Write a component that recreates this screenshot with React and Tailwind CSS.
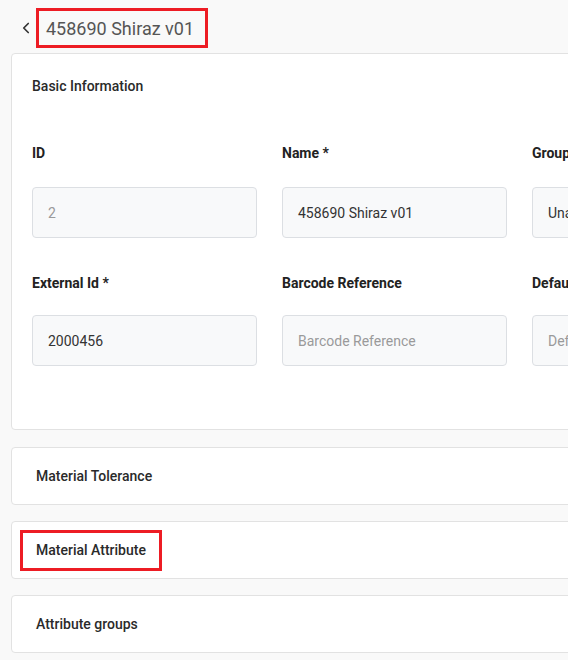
import React from 'react';
import { ChevronLeft } from 'lucide-react';

const Field = ({ label, value, placeholder, disabled, gap }) => (
  <div className="flex flex-col">
    <div className="h-5 text-sm font-bold leading-5 text-[#222]">{label}</div>
    <div
      className={`${gap} flex h-[51px] items-center rounded border border-[#dcdfe3] bg-[#f8f9fa] px-[15px] text-sm ${
        disabled || !value ? 'text-[#9a9a9a]' : 'text-[#333]'
      }`}
    >
      {value || placeholder}
    </div>
  </div>
);

const CollapsedCard = ({ title, highlight }) => (
  <div className="flex h-[58px] items-center rounded border border-[#e2e2e2] bg-white px-6">
    <span className="relative text-sm font-medium leading-5 text-[#2a2a2a]">
      {title}
      {highlight && (
        <span className="absolute -bottom-[11px] -left-4 -right-4 -top-[10px] border-[3px] border-[#ed1c24]" />
      )}
    </span>
  </div>
);

const App = () => {
  const rows = [
    {
      gap: 'mt-6',
      fields: [
        { label: 'ID', value: '2', disabled: true },
        { label: 'Name *', value: '458690 Shiraz v01' },
        { label: 'Group', value: 'Unassigned' },
      ],
    },
    {
      gap: 'mt-[22px]',
      fields: [
        { label: 'External Id *', value: '2000456' },
        { label: 'Barcode Reference', placeholder: 'Barcode Reference' },
        { label: 'Default Unit', placeholder: 'Default Unit' },
      ],
    },
  ];

  return (
    <div
      className="h-[660px] w-[568px] overflow-hidden bg-[#f9f9f9]"
      style={{ fontFamily: 'Roboto, "Liberation Sans", sans-serif' }}
    >
      <div className="w-[700px] pl-[11px]">
        <div className="flex h-[53px] items-start pt-2">
          <ChevronLeft size={18} strokeWidth={2.25} className="ml-[6px] mt-[11px] text-[#333]" />
          <div className="ml-px flex h-10 items-center border-[3px] border-[#ed1c24] pl-[7px] pr-[11px] text-[18px] text-[#555]">
            458690 Shiraz v01
          </div>
        </div>

        <div className="rounded border border-[#e2e2e2] bg-white px-5 pb-[63px] pt-[22px]">
          <div className="text-sm font-medium leading-5 text-[#2a2a2a]">Basic Information</div>
          <div className="mt-[47px] flex flex-col gap-[35px]">
            {rows.map((row, i) => (
              <div key={i} className="grid grid-cols-[225px_225px_225px] gap-x-[25px]">
                {row.fields.map((f) => (
                  <Field key={f.label} gap={row.gap} {...f} />
                ))}
              </div>
            ))}
          </div>
        </div>

        <div className="mt-[17px] flex flex-col gap-4">
          <CollapsedCard title="Material Tolerance" />
          <CollapsedCard title="Material Attribute" highlight />
          <CollapsedCard title="Attribute groups" />
        </div>
      </div>
    </div>
  );
};

export default App;
